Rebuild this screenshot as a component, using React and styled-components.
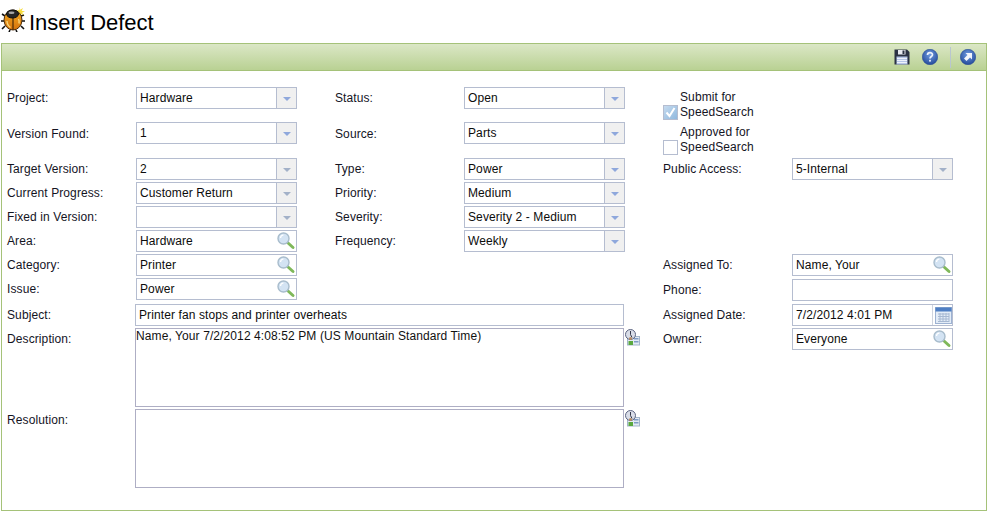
import React from "react";
import styled, { createGlobalStyle } from "styled-components";

const Global = createGlobalStyle`
    html, body { margin:0; padding:0; background:#fff; }
    body { font-family:"Liberation Sans", Arial, sans-serif; font-size:12px; letter-spacing:0.1px; color:#111; }
`;

const Page = styled.div`
    width:989px;
    height:516px;
    overflow:hidden;
    padding:5px 0 0 1px;
    box-sizing:border-box;
`;

const TitleBar = styled.div`
    display:flex;
    align-items:flex-start;
    gap:3px;
    height:38px;
`;

const Title = styled.h1`
    margin:5px 0 0;
    font-size:22px;
    line-height:26px;
    font-weight:normal;
    letter-spacing:0;
    color:#000;
`;

const Panel = styled.div`
    width:986px;
    height:468px;
    box-sizing:border-box;
    border:1px solid #a5c279;
`;

const Toolbar = styled.div`
    height:27px;
    box-sizing:border-box;
    display:flex;
    align-items:center;
    justify-content:flex-end;
    padding-right:10px;
    gap:11px;
    background:linear-gradient(#dbe7c6, #b9d193);
    border-bottom:1px solid #a5c279;
`;

const SaveSlot = styled.div`
    display:flex;
    margin-right:1px;
`;

const ToolDivider = styled.div`
    width:1px;
    height:21px;
    margin:0 -2px 0 1px;
    background:#b9c6cf;
`;

const Body = styled.div`
    display:flex;
    padding:16px 0 0 5px;
`;

const MainGrid = styled.div`
    display:grid;
    grid-template-columns:129px 161px 38px 129px 161px;
    grid-template-rows:35px 36px 24px 24px 24px 24px 24px 26px 24px 81px 81px;
    align-items:start;
`;

const SideGrid = styled.div`
    margin-left:38px;
    display:grid;
    grid-template-columns:129px 161px;
    grid-template-rows:35px 36px 96px 25px 25px 24px;
    align-items:start;
`;

const Label = styled.div`
    height:22px;
    line-height:${p => (p.$low ? "24px" : "22px")};
    color:#14141f;
    grid-column:${p => p.$col || "auto"};
`;

const Field = styled.div`
    display:flex;
    align-items:center;
    height:22px;
    box-sizing:border-box;
    background:#fff;
    border:1px solid #b5bdd0;
`;

const WideField = styled(Field)`
    grid-column:2 / span 4;
    width:489px;
    margin-left:-1px;
`;

const Value = styled.div`
    flex:1;
    padding-left:3px;
    white-space:nowrap;
    color:#0c0c0c;
`;

const ArrowCell = styled.div`
    width:19px;
    height:20px;
    display:flex;
    align-items:center;
    justify-content:center;
    background:#f0f0f0;
    border-left:1px solid #b5bdd0;
`;

const Triangle = styled.div`
    width:0;
    height:0;
    margin-top:2px;
    border-left:4px solid transparent;
    border-right:4px solid transparent;
    border-top:4px solid ${p => (p.$off ? "#a3b1c8" : "#8fa8dc")};
`;

const CalendarCell = styled.div`
    height:20px;
    display:flex;
    align-items:center;
    padding-left:2px;
    border-left:1px solid #cfd4de;
`;

const TextArea = styled.div`
    grid-column:2 / span 4;
    margin-left:-1px;
    display:flex;
    align-items:flex-start;
`;

const AreaBox = styled.div`
    width:489px;
    height:79px;
    flex:none;
    box-sizing:border-box;
    border:1px solid #aeaec4;
    line-height:14px;
    background:#fff;
`;

const AreaIcon = styled.div`
    margin:1px 0 0 1px;
    height:17px;
`;

const CheckRow = styled.div`
    grid-column:1 / span 2;
    display:flex;
    align-items:flex-end;
    gap:2px;
    padding-top:3px;
`;

const Box = styled.div`
    width:15px;
    height:15px;
    box-sizing:border-box;
    border:1px solid #b5bdd0;
    background:#fff;
    display:flex;
`;

const CheckText = styled.div`
    width:90px;
    line-height:15px;
    color:#14141f;
`;

const Spacer = styled.div`
    grid-column:4 / span 2;
`;

const Magnify = () => (
    <svg width="20" height="20" viewBox="0 0 20 20">
        <line x1="11.500" y1="11.500" x2="17" y2="16.500" stroke="#7fb85a" strokeWidth="3" strokeLinecap="round" />
        <circle cx="7.500" cy="7.500" r="5.500" fill="#d3e3f3" stroke="#a8bccc" strokeWidth="1.400" />
        <path d="M4.500 7 A3.200 3.200 0 0 1 7.500 4" fill="none" stroke="#fff" strokeWidth="1.200" />
    </svg>
);

const Calendar = () => (
    <svg width="17" height="17" viewBox="0 0 17 17">
        <rect x="0.500" y="0.500" width="16" height="16" fill="#e3ecf7" stroke="#9db2d2" />
        <rect x="0.500" y="0.500" width="16" height="4" fill="#4f7fc4" />
        <path d="M3 7h11M3 9.500h11M3 12h11M3 14.500h11M5 6v9M8 6v9M11 6v9M14 6v9" stroke="#a6b8d2" strokeWidth="1" fill="none" />
    </svg>
);

const Check = () => (
    <svg width="13" height="13" viewBox="0 0 13 13">
        <defs>
            <linearGradient id="tick" x1="0" y1="0" x2="1" y2="1">
                <stop offset="0" stopColor="#c6dbef" />
                <stop offset="1" stopColor="#8fb8de" />
            </linearGradient>
        </defs>
        <rect x="0" y="0" width="13" height="13" fill="url(#tick)" />
        <path d="M2.500 6.500l3 3.500 5-8" fill="none" stroke="#fff" strokeWidth="2" />
    </svg>
);

const Bug = () => (
    <svg width="25" height="27" viewBox="0 0 25 27">
        <defs>
            <linearGradient id="shell" x1="0" y1="0" x2="0" y2="1">
                <stop offset="0" stopColor="#f7ae24" />
                <stop offset="1" stopColor="#d4720c" />
            </linearGradient>
        </defs>
        <path d="M4 11L1 9M3 16H0M4 21l-3 3M20 11l3-1M21 16h3M20 21l3 3M9 25l-1 2M15 25l1 2" stroke="#111" strokeWidth="1.600" />
        <path d="M18.500 2l.7 2.800L22 3l-1.300 2.800 3.300.7-3 1.200 2 2.500-3-1.200-.8 2.500-1-3-2.500.8 1.500-2.800-1.500-1.700 2.800.4z" fill="#f6dc3e" />
        <ellipse cx="12" cy="15" rx="9" ry="10" fill="url(#shell)" stroke="#4a2a08" />
        <path d="M12 10v15" stroke="#4a2a08" strokeWidth="1.200" />
        <path d="M6 16c0 3 1.500 5 3.500 6.500M17.500 14c.8 1.500.8 3 .5 4.500" stroke="#fbd77a" strokeWidth="1.400" fill="none" />
        <ellipse cx="11.500" cy="9" rx="6" ry="4" fill="#262626" stroke="#0c0c0c" />
        <ellipse cx="10.500" cy="7.800" rx="3" ry="1.300" fill="#a8a8a8" />
    </svg>
);

const Save = () => (
    <svg width="16" height="16" viewBox="0 0 16 16">
        <path d="M0.500 0.500H13L15.500 3V15.500H0.500Z" fill="#2b3244" />
        <rect x="4" y="1" width="7.500" height="4.500" fill="#e8eaf0" />
        <rect x="8.500" y="1.500" width="2" height="3.500" fill="#2b3244" />
        <path d="M2.500 7.500h11v8h-11z" fill="#b6c6e8" />
        <path d="M3 9.500h10M3 11.500h10M3 13.500h10" stroke="#eef2fb" />
    </svg>
);

const BlueBall = ({ children }) => (
    <svg width="16" height="16" viewBox="0 0 16 16">
        <defs>
            <radialGradient id="ball" cx="50%" cy="35%" r="70%">
                <stop offset="0" stopColor="#6f9be0" />
                <stop offset="1" stopColor="#1f4596" />
            </radialGradient>
        </defs>
        <circle cx="8" cy="8" r="7.700" fill="url(#ball)" stroke="#2a4e96" strokeWidth="0.600" />
        {children}
    </svg>
);

const Help = () => (
    <BlueBall>
        <path d="M5.500 6c0-3 5-3 5-.300 0 1.800-2.500 1.800-2.500 3.800" fill="none" stroke="#eaf0fb" strokeWidth="1.700" />
        <rect x="7.100" y="10.800" width="1.800" height="1.800" fill="#eaf0fb" />
    </BlueBall>
);

const Launch = () => (
    <BlueBall>
        <path d="M5.500 4h6.500v6.500L10 8.500 6.500 12 4 9.500 7.500 6z" fill="#f2f5fb" />
    </BlueBall>
);

const ClockCard = () => (
    <svg width="15" height="17" viewBox="0 0 15 17">
        <rect x="2.500" y="7.500" width="12" height="8.500" fill="#e2eaf4" stroke="#a3b5ca" />
        <rect x="9" y="9" width="4.500" height="1.500" fill="#7f9bc4" />
        <rect x="9" y="12" width="4.500" height="1.500" fill="#7f9bc4" />
        <circle cx="5.500" cy="5.500" r="5" fill="#d9dde8" stroke="#5c6480" />
        <path d="M5.500 2V5.500l1.500 3" stroke="#33384a" fill="none" />
        <circle cx="5.500" cy="9.500" r="1.500" fill="#b98a60" />
        <path d="M3.500 16v-4h4.500v4z" fill="#5aa83e" />
    </svg>
);

const Select = ({ value, off }) => (
    <Field>
        <Value>{value}</Value>
        <ArrowCell>
            <Triangle $off={off} />
        </ArrowCell>
    </Field>
);

const Lookup = ({ value }) => (
    <Field>
        <Value>{value}</Value>
        <Magnify />
    </Field>
);

export default function App() {
    return (
        <Page>
            <Global />
            <TitleBar>
                <Bug />
                <Title>Insert Defect</Title>
            </TitleBar>
            <Panel>
                <Toolbar>
                    <SaveSlot><Save /></SaveSlot>
                    <Help />
                    <ToolDivider />
                    <Launch />
                </Toolbar>
                <Body>
                    <MainGrid>
                        <Label>Project:</Label>
                        <Select value="Hardware" />
                        <Label $col="4">Status:</Label>
                        <Select value="Open" />

                        <Label $low>Version Found:</Label>
                        <Select value="1" />
                        <Label $col="4" $low>Source:</Label>
                        <Select value="Parts" />

                        <Label>Target Version:</Label>
                        <Select value="2" off />
                        <Label $col="4">Type:</Label>
                        <Select value="Power" />

                        <Label>Current Progress:</Label>
                        <Select value="Customer Return" off />
                        <Label $col="4">Priority:</Label>
                        <Select value="Medium" />

                        <Label>Fixed in Version:</Label>
                        <Select value="" off />
                        <Label $col="4">Severity:</Label>
                        <Select value="Severity 2 - Medium" />

                        <Label>Area:</Label>
                        <Lookup value="Hardware" />
                        <Label $col="4">Frequency:</Label>
                        <Select value="Weekly" />

                        <Label>Category:</Label>
                        <Lookup value="Printer" />
                        <Spacer />

                        <Label>Issue:</Label>
                        <Lookup value="Power" />
                        <Spacer />

                        <Label>Subject:</Label>
                        <WideField>
                            <Value>Printer fan stops and printer overheats</Value>
                        </WideField>

                        <Label>Description:</Label>
                        <TextArea>
                            <AreaBox>Name, Your 7/2/2012 4:08:52 PM (US Mountain Standard Time)</AreaBox>
                            <AreaIcon><ClockCard /></AreaIcon>
                        </TextArea>

                        <Label>Resolution:</Label>
                        <TextArea>
                            <AreaBox />
                            <AreaIcon><ClockCard /></AreaIcon>
                        </TextArea>
                    </MainGrid>
                    <SideGrid>
                        <CheckRow>
                            <Box><Check /></Box>
                            <CheckText>Submit for SpeedSearch</CheckText>
                        </CheckRow>
                        <CheckRow>
                            <Box />
                            <CheckText>Approved for SpeedSearch</CheckText>
                        </CheckRow>
                        <Label>Public Access:</Label>
                        <Select value="5-Internal" off />
                        <Label>Assigned To:</Label>
                        <Lookup value="Name, Your" />
                        <Label>Phone:</Label>
                        <Field />
                        <Label>Assigned Date:</Label>
                        <Field>
                            <Value>7/2/2012 4:01 PM</Value>
                            <CalendarCell><Calendar /></CalendarCell>
                        </Field>
                        <Label>Owner:</Label>
                        <Lookup value="Everyone" />
                    </SideGrid>
                </Body>
            </Panel>
        </Page>
    );
}
